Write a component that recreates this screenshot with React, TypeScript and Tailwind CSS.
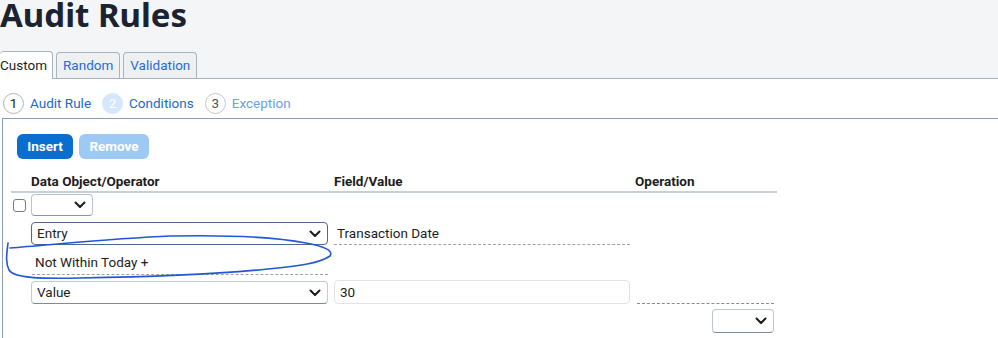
import { ReactNode } from "react";

function Chevron() {
  return (
    <svg width="12" height="8" viewBox="0 0 12 8" className="shrink-0">
      <path d="M1.5 1.5 L6 6 L10.5 1.5" fill="none" stroke="#1b1b1b" strokeWidth="2" strokeLinecap="round" strokeLinejoin="round" />
    </svg>
  );
}

function Select({
  label,
  className,
}: {
  label?: string;
  className: string;
}) {
  return (
    <div
      className={[
        "flex items-center justify-between rounded-[4px] bg-white pl-[5px] pr-[6px] text-[13.5px] text-[#1d1d1d]",
        className,
      ].join(" ")}
    >
      <span>{label}</span>
      <Chevron />
    </div>
  );
}

function Step({
  n,
  label,
  state,
}: {
  n: number;
  label: string;
  state: "done" | "active" | "next";
}) {
  const circle =
    state === "active"
      ? "bg-[#d4e7fc] text-white border-[#d4e7fc]"
      : state === "done"
      ? "bg-white text-[#222] border-[#b4b4b4]"
      : "bg-white text-[#555] border-[#c6c6c6]";
  const text = state === "next" ? "text-[#6ea0e2]" : "text-[#2368d0]";
  return (
    <div className="flex items-center gap-[6px]">
      <div
        className={[
          "flex h-[21px] w-[21px] items-center justify-center rounded-full border text-[13.5px]",
          circle,
        ].join(" ")}
      >
        {n}
      </div>
      <span className={["text-[13.5px]", text].join(" ")}>{label}</span>
    </div>
  );
}

function Tab({ children, active }: { children: ReactNode; active?: boolean }) {
  return (
    <div
      className={[
        "flex h-[26px] items-center rounded-t-[4px] border border-b-0 border-[#a9b3be] px-[6px] text-[13.5px]",
        active
          ? "-mb-px h-[28px] border-l-0 bg-white pl-0 pr-[5px] text-[#1d1d1d]"
          : "bg-[#eef0f2] text-[#2a6bd1]",
      ].join(" ")}
    >
      {children}
    </div>
  );
}

export default function App() {
  return (
    <div
      className="relative h-[338px] w-[998px] overflow-hidden bg-white"
      style={{ fontFamily: 'Roboto, "Noto Sans", sans-serif' }}
    >
      {/* page header */}
      <div className="flex h-[79px] flex-col bg-[#f4f5f6]">
        <h1
          className="text-[33px] font-bold leading-[30px] text-[#1c2330]"
          style={{ fontFamily: '"Noto Sans", sans-serif' }}
        >
          Audit Rules
        </h1>
        <div className="mt-auto flex items-end gap-[3px] border-b border-[#a9b3be]">
          <Tab active>Custom</Tab>
          <Tab>Random</Tab>
          <Tab>Validation</Tab>
        </div>
      </div>

      {/* wizard steps */}
      <div className="flex h-[39px] items-center gap-[11px] pl-[3px] pt-[10px]">
        <Step n={1} label="Audit Rule" state="done" />
        <Step n={2} label="Conditions" state="active" />
        <Step n={3} label="Exception" state="next" />
      </div>

      {/* panel */}
      <div className="ml-[2px] h-[220px] border-l border-t border-[#8c9fb2] pl-[14px] pt-[15px]">
        <div className="flex gap-[6px]">
          <button className="h-[25px] w-[56px] rounded-[6px] bg-[#0a6ed1] text-[13.5px] font-bold text-white">
            Insert
          </button>
          <button className="h-[25px] w-[70px] rounded-[6px] bg-[#9dcaf5] text-[13.5px] font-bold text-white">
            Remove
          </button>
        </div>

        {/* table */}
        <div className="ml-[-6px] mt-[12px] w-[766px] text-[13.5px] text-[#1d1d1d]">
          <div className="flex h-[22px] items-center border-b-2 border-[#c5d0da] font-bold">
            <div className="w-[20px]" />
            <div className="w-[303px]">Data Object/Operator</div>
            <div className="w-[301px]">Field/Value</div>
            <div>Operation</div>
          </div>

          {/* row 1 */}
          <div className="mt-px flex h-[22px] items-center">
            <div className="flex w-[20px] items-center pl-[2px]">
              <div className="h-[13px] w-[13px] rounded-[3px] border border-[#7a7a7a]" />
            </div>
            <Select className="h-[22px] w-[62px] border border-[#b9c2cc] border-b-[#8896a5]" />
          </div>

          {/* row 2 */}
          <div className="mt-[6px] flex h-[23px] items-center">
            <div className="w-[20px]" />
            <Select label="Entry" className="h-[23px] w-[297px] border border-[#50698a]" />
            <div className="ml-[6px] flex h-[23px] w-[296px] items-center border-b border-dashed border-[#a0a0a0] pl-[3px]">
              Transaction Date
            </div>
          </div>

          {/* row 3 */}
          <div className="mt-[6px] flex h-[24px] items-center">
            <div className="w-[21px]" />
            <div className="flex h-[24px] w-[296px] items-center border-b border-dashed border-[#a0a0a0] pl-[3px]">
              Not Within Today +
            </div>
          </div>

          {/* row 4 */}
          <div className="mt-[6px] flex h-[23px] items-end">
            <div className="w-[20px]" />
            <Select label="Value" className="h-[23px] w-[297px] border border-[#c2cad3] border-b-[#7d8b9a]" />
            <div className="ml-[6px] flex h-[24px] w-[296px] items-center rounded-[4px] border border-[#e3e3e3] pl-[5px]">
              30
            </div>
            <div className="ml-[7px] h-px w-[137px] border-b border-dashed border-[#8a8a8a]" />
          </div>

          {/* row 5 */}
          <div className="mt-[5px] flex h-[24px] justify-end pr-[3px]">
            <Select className="h-[24px] w-[62px] border border-[#bcc4cd] border-b-[#7d8b9a]" />
          </div>
        </div>
      </div>

      {/* hand drawn annotation */}
      <svg
        className="pointer-events-none absolute left-0 top-0"
        width="998"
        height="338"
        viewBox="0 0 998 338"
      >
        <path
          d="M8 243 C7 252 5 262 9 270 C14 278 40 279 80 278 C150 277 220 274 268 269 C300 266 320 263 330 256 C334 250 322 246 306 243 C270 236 220 235 170 236 C120 238 60 244 10 248"
          fill="none"
          stroke="#1f57d6"
          strokeWidth="1.6"
          strokeLinecap="round"
        />
      </svg>
    </div>
  );
}
